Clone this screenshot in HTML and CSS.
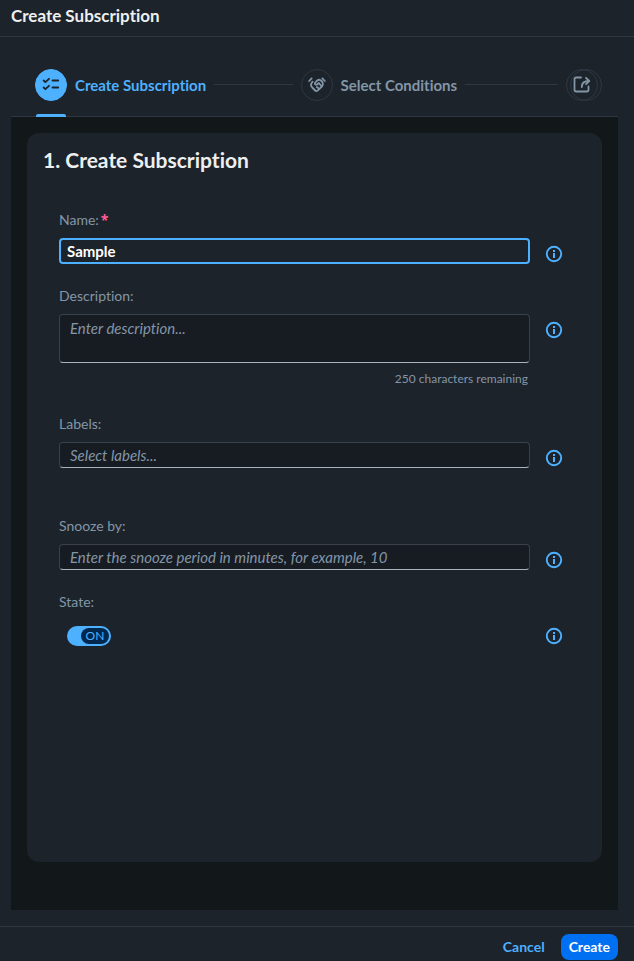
FILE: index.html
```html
<!DOCTYPE html>
<html lang="en">
<head>
    <meta charset="UTF-8">
    <meta name="viewport" content="width=device-width, initial-scale=1.0">
    <title>Create Subscription</title>
    <link rel="stylesheet" href="styles.css">
</head>
<body>
    <svg class="sprite" aria-hidden="true">
        <symbol id="icon-info" viewBox="0 0 18 18">
            <circle cx="9" cy="9" r="7.2" fill="none" stroke="currentColor" stroke-width="1.9"/>
            <rect x="8" y="5" width="2" height="2" fill="currentColor"/>
            <rect x="8" y="8" width="2" height="5" fill="currentColor"/>
        </symbol>
    </svg>
    <div class="dialog">
        <header class="dialog-header">
            <h1>Create Subscription</h1>
        </header>

        <nav class="wizard-nav" aria-label="Steps">
            <div class="step active">
                <span class="step-circle">
                    <svg viewBox="0 0 18 18" width="18" height="18" fill="none" stroke="currentColor" stroke-width="1.8" stroke-linecap="round" stroke-linejoin="round">
                        <path d="M1.6 5.5 L3.4 7.2 L7 3.8"/>
                        <path d="M1.6 12.5 L3.4 14.2 L7 10.8"/>
                        <path d="M10.5 5.5 H16.2"/>
                        <path d="M10.5 12.5 H16.2"/>
                    </svg>
                </span>
                <a class="step-title" href="#step1">Create Subscription</a>
                <span class="step-line"></span>
            </div>
            <div class="step">
                <span class="step-circle">
                    <svg viewBox="0 0 18 18" width="18" height="18" fill="none" stroke="currentColor" stroke-width="1.8" stroke-linecap="round" stroke-linejoin="round">
                        <path d="M1.2 6 L3.6 3.4"/>
                        <path d="M14.4 3.4 L16.8 6"/>
                        <path d="M4.6 6.6 C2.7 8.7 2.6 10.8 4.2 12.5 L7.2 15.5 C8 16.3 9.2 16.2 9.8 15.3 L13.6 11.8 C15.2 10.2 15.3 7.6 13.6 6 C12 4.5 10 4.6 8.6 6 L6.9 8 C6.7 9.8 8.5 10.3 9.8 8.8 L10.9 8 L13.4 11.2"/>
                        <path d="M8.8 12 L11.2 13.8"/>
                    </svg>
                </span>
                <a class="step-title" href="#step2">Select Conditions</a>
                <span class="step-line"></span>
            </div>
            <div class="step last">
                <span class="step-circle stacked">
                    <svg viewBox="0 0 18 18" width="18" height="18" fill="none" stroke="currentColor" stroke-width="1.8" stroke-linecap="round" stroke-linejoin="round">
                        <path d="M8 2.5 H3.2 C2.2 2.5 1.5 3.2 1.5 4.2 V14.8 C1.5 15.8 2.2 16.5 3.2 16.5 H13.8 C14.8 16.5 15.5 15.8 15.5 14.8 V11.5"/>
                        <path d="M8.8 12 C8.8 8 10.8 6 16 6"/>
                        <path d="M13 2.8 L16.2 6 L13 9.2"/>
                    </svg>
                </span>
            </div>
        </nav>

        <main class="wizard-body">
            <section class="card" id="step1">
                <h2>1. Create Subscription</h2>
                <form class="form" id="subscriptionForm">
                    <div class="field">
                        <label for="name">Name:<span class="required">*</span></label>
                        <div class="control">
                            <input type="text" id="name" class="filled" value="Sample" required>
                        </div>
                        <button type="button" class="info" aria-label="About name"><svg><use href="#icon-info"/></svg></button>
                    </div>
                    <div class="field">
                        <label for="description">Description:</label>
                        <div class="control">
                            <textarea id="description" placeholder="Enter description..." maxlength="250"></textarea>
                            <p class="counter">250 characters remaining</p>
                        </div>
                        <button type="button" class="info" aria-label="About description"><svg><use href="#icon-info"/></svg></button>
                    </div>
                    <div class="field with-tokens">
                        <label for="labels">Labels:</label>
                        <div class="control">
                            <input type="text" id="labels" placeholder="Select labels...">
                        </div>
                        <button type="button" class="info" aria-label="About labels"><svg><use href="#icon-info"/></svg></button>
                    </div>
                    <div class="field">
                        <label for="snooze">Snooze by:</label>
                        <div class="control">
                            <input type="text" id="snooze" placeholder="Enter the snooze period in minutes, for example, 10">
                        </div>
                        <button type="button" class="info" aria-label="About snooze"><svg><use href="#icon-info"/></svg></button>
                    </div>
                    <div class="field">
                        <label for="state">State:</label>
                        <div class="control">
                            <div class="switch">
                                <input type="checkbox" id="state" role="switch" checked>
                                <span class="switch-handle">ON</span>
                            </div>
                        </div>
                        <button type="button" class="info" aria-label="About state"><svg><use href="#icon-info"/></svg></button>
                    </div>
                </form>
            </section>
        </main>

        <footer class="dialog-footer">
            <button type="button" class="btn">Cancel</button>
            <button type="submit" class="btn primary" form="subscriptionForm">Create</button>
        </footer>
    </div>
</body>
</html>
```
FILE: styles.css
```css
* {
    box-sizing: border-box;
}
body {
    margin: 0;
    background-color: #1d232a;
    color: #8396a8;
    font-family: Lato, "Noto Sans", sans-serif;
    font-size: 14px;
    font-variant-ligatures: none;
    line-height: 20px;
}
h1, h2, p {
    margin: 0;
}
input, textarea, button {
    font: inherit;
    font-variant-ligatures: none;
    color: inherit;
}
.sprite {
    display: none;
}
.dialog {
    display: flex;
    flex-direction: column;
    min-height: 100vh;
}
.dialog-header {
    padding: 6px 11px 10px;
    border-bottom: 1px solid #2e3742;
}
.dialog-header h1 {
    color: #edeff0;
    font-size: 17px;
    line-height: 20px;
}

/* Wizard steps */
.wizard-nav {
    display: flex;
    gap: 8px;
    height: 80px;
    margin: 0 16px 0 11px;
    padding: 16px 20px 0 24px;
    border-bottom: 1px solid #2e3742;
}
.step {
    display: flex;
    flex: 1;
    align-items: center;
    gap: 8px;
}
.step.last {
    flex: none;
}
.step-circle {
    position: relative;
    display: flex;
    align-items: center;
    justify-content: center;
    width: 32px;
    height: 32px;
    padding-bottom: 2px;
    border: 1px solid #2e3742;
    border-radius: 50%;
}
.step-title {
    color: #8396a8;
    font-size: 15px;
    font-weight: bold;
    text-decoration: none;
    white-space: nowrap;
}
.step-line {
    flex: 1;
    height: 1px;
    background-color: #2e3742;
}
.active .step-circle {
    background-color: #4db1ff;
    border-color: #4db1ff;
    color: #1d232a;
}
.active .step-title {
    color: #4db1ff;
}
.active .step-circle::after {
    content: "";
    position: absolute;
    left: 0;
    right: 0;
    bottom: -17px;
    height: 3px;
    border-radius: 2px 2px 0 0;
    background-color: #4db1ff;
}
.stacked::after {
    content: "";
    position: absolute;
    inset: -1px -5px -1px 3px;
    border: 1px solid #2e3742;
    border-radius: 50%;
}

/* Step content */
.wizard-body {
    display: flex;
    flex: 1;
    margin: 0 16px 16px 11px;
    padding: 16px 16px 48px;
    background-color: #12171a;
}
.card {
    flex: 1;
    padding: 16px;
    border-radius: 12px;
    background-color: #1d232a;
}
.card h2 {
    color: #edeff0;
    font-size: 21px;
    line-height: 22px;
}
.form {
    padding: 39px 16px 0;
}
.field {
    display: grid;
    grid-template-columns: 1fr 32px;
    gap: 8px;
    margin-bottom: 16px;
}
.field label {
    grid-column: 1 / -1;
}
.field.with-tokens {
    margin-bottom: 42px;
}
.required {
    margin-left: 2px;
    color: #ff5c93;
    font-family: "Noto Sans", sans-serif;
    font-weight: bold;
    line-height: 16px;
}
.control input[type="text"], .control textarea {
    display: block;
    width: 100%;
    padding: 0 10px;
    border: 1px solid #3b4149;
    border-bottom-color: #a9b4be;
    border-radius: 4px;
    background-color: #171b22;
    font-size: 15px;
    outline: none;
}
.control input[type="text"] {
    height: 26px;
}
.control textarea {
    height: 49px;
    padding-top: 3px;
    resize: none;
}
.control input[type="text"].filled {
    padding: 0 6px;
    border: 2px solid #4db1ff;
    background-color: #1d232a;
    color: #ffffff;
    font-weight: bold;
}
::placeholder {
    color: #8396a8;
    font-style: italic;
    opacity: 1;
}
.counter {
    padding: 8px 2px 11px;
    font-size: 12px;
    line-height: 16px;
    text-align: right;
}
.info {
    display: flex;
    align-items: center;
    justify-content: center;
    width: 32px;
    height: 32px;
    padding: 0;
    border: none;
    background: none;
    color: #4db1ff;
    cursor: pointer;
}
.info svg {
    width: 18px;
    height: 18px;
}

/* Toggle */
.switch {
    display: grid;
    width: 44px;
    margin: 6px 8px;
}
.switch input, .switch-handle {
    grid-area: 1 / 1;
}
.switch input {
    appearance: none;
    width: 44px;
    height: 20px;
    margin: 0;
    border-radius: 10px;
    background-color: #4db1ff;
    cursor: pointer;
}
.switch-handle {
    justify-self: end;
    align-self: center;
    width: 28px;
    margin-right: 2px;
    border-radius: 8px;
    background-color: #00284f;
    color: #4db1ff;
    font-size: 12px;
    line-height: 16px;
    text-align: center;
    pointer-events: none;
}

.dialog-footer {
    display: flex;
    justify-content: flex-end;
    gap: 8px;
    padding: 7px 16px 1px;
    border-top: 1px solid #2e3742;
}
.btn {
    height: 26px;
    padding: 0 8px;
    border: none;
    border-radius: 8px;
    background: none;
    color: #4db1ff;
    font-weight: bold;
    cursor: pointer;
}
.btn.primary {
    background-color: #0070f2;
    color: #ffffff;
}
```
